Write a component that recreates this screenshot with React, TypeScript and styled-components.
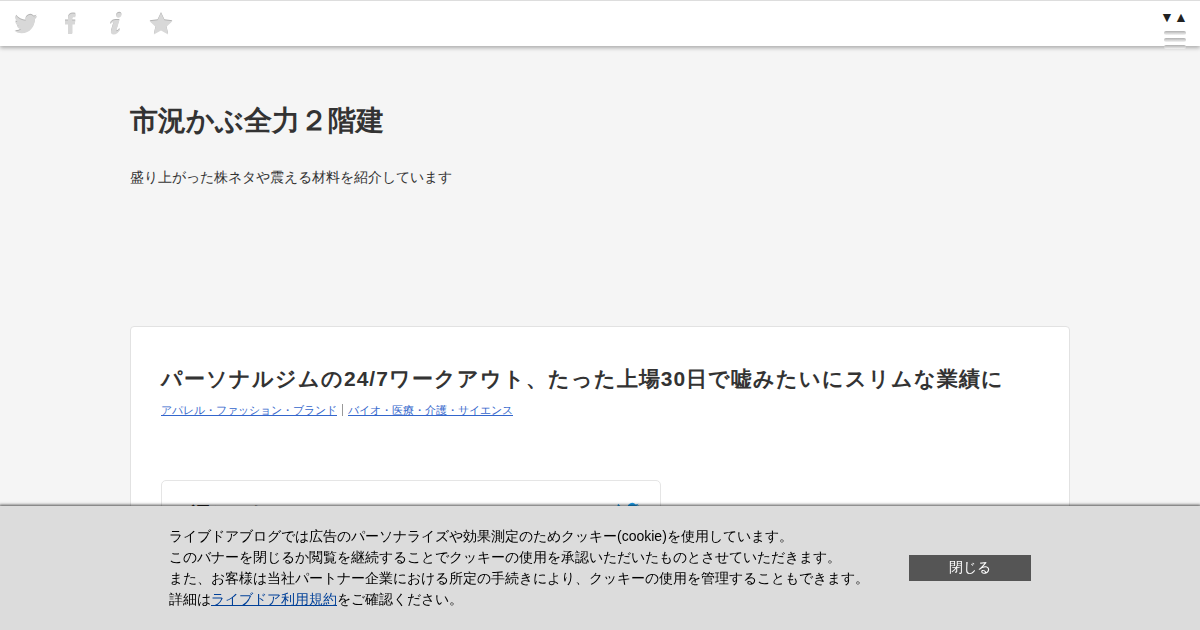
import React, { useState } from 'react';
import styled, { createGlobalStyle } from 'styled-components';

const GlobalStyle = createGlobalStyle`
  * { box-sizing: border-box; }
  body {
    margin: 0;
    background: #f5f5f5;
    color: #333;
    font: 14px/21px "Liberation Sans", sans-serif;
  }
  h1, h2, p { margin: 0; }
`;

const Page = styled.div`
  height: 100vh;
  overflow: hidden;
`;

const TopBar = styled.header`
  display: flex;
  justify-content: space-between;
  align-items: flex-start;
  height: 46px;
  padding: 0 14px;
  background: #fff;
  border-top: 1px solid #ddd;
  box-shadow: 0 2px 4px rgba(0, 0, 0, 0.3);
`;

const SocialNav = styled.nav`
  display: flex;
  align-items: center;
  gap: 21px;
  height: 44px;
`;

const IconLink = styled.a`
  display: block;
  width: 24px;
  height: 24px;
  svg { display: block; }
`;

const Tools = styled.div`
  display: flex;
  flex-direction: column;
  align-items: flex-end;
  gap: 3px;
  padding-top: 6px;
`;

const Jump = styled.div`
  display: flex;
  margin-right: -2px;
`;

const JumpLink = styled.a`
  width: 14px;
  text-align: center;
  color: #222;
  text-decoration: none;
`;

const MenuButton = styled.button`
  display: flex;
  flex-direction: column;
  gap: 3px;
  padding: 0;
  border: 0;
  background: none;
`;

const MenuLine = styled.span`
  width: 22px;
  height: 4px;
  border-radius: 2px;
  background: linear-gradient(#b0b0b0, #d8d8d8 60%, #f4f4f4);
`;

const Container = styled.div`
  max-width: 940px;
  margin: 0 auto;
`;

const BlogHeader = styled.div`
  height: 280px;
  padding-top: 54px;
`;

const BlogTitle = styled.h1`
  font-size: 28px;
  line-height: 42px;
`;

const BlogDescription = styled.p`
  margin-top: 25px;
`;

const Article = styled.article`
  min-height: 700px;
  padding: 36px 30px;
  background: #fff;
  border: 1px solid #e2e2e2;
  border-radius: 4px;
`;

const ArticleTitle = styled.h2`
  font-size: 21px;
  line-height: 32px;
  letter-spacing: 1px;
`;

const Categories = styled.div`
  display: flex;
  align-items: center;
  gap: 5px;
  margin-top: 7px;
  font-size: 11px;
  line-height: 16px;
`;

const CategoryLink = styled.a`
  color: #3366cc;
`;

const Divider = styled.span`
  width: 1px;
  height: 12px;
  background: #999;
`;

const Embed = styled.blockquote`
  display: flex;
  justify-content: space-between;
  max-width: 500px;
  height: 200px;
  margin: 62px 0 0;
  padding: 19px 20px 19px 28px;
  border: 1px solid #e5e5e5;
  border-radius: 5px;
`;

const EmbedAuthor = styled.strong`
  font-size: 20px;
  line-height: 28px;
  color: #222;
`;

const CookieBanner = styled.aside`
  position: fixed;
  left: 0;
  right: 0;
  bottom: 0;
  padding: 20px;
  background: #dcdcdc;
  color: #000;
  box-shadow: 0 0 3px 1px rgba(0, 0, 0, 0.7);
`;

const BannerInner = styled.div`
  display: flex;
  align-items: center;
  justify-content: space-between;
  max-width: 862px;
  margin: 0 auto;
`;

const TermsLink = styled.a`
  color: #004098;
`;

const CloseButton = styled.button`
  width: 122px;
  height: 26px;
  padding: 0 0 2px;
  border: 0;
  background: #555;
  color: #fff;
  font: inherit;
`;

const birdPath =
  'M23.1 5.1c-.8.4-1.7.6-2.6.7.9-.6 1.6-1.4 2-2.4-.9.5-1.9.9-2.9 1.1A4.6 4.6 0 0 0 11.700 8.700C7.800 8.500 4.400 6.700 2.100 3.800c-1.200 2.100-.6 4.800 1.400 6.200-.7 0-1.500-.2-2.100-.6 0 2.200 1.600 4.200 3.700 4.600-.7.2-1.4.2-2.1.1.6 1.8 2.300 3.200 4.300 3.200A9.400 9.400 0 0 1 .5 19.200a13.100 13.100 0 0 0 7.100 2.100c8.600 0 13.400-7.300 13.100-13.800.9-.7 1.700-1.500 2.400-2.400z';

const icons = [
  { label: 'Twitter', path: birdPath },
  { label: 'Facebook', path: 'M9 22v-9.500H6V8.600h3V6.200C9 3 11 1.500 14 1.500l2.300.2v3.500h-1.500c-1.200 0-1.600.6-1.600 1.500v1.900h3.100l-.5 3.900h-2.600V22z' },
  { label: 'Information', path: 'M15.200.8c1.500 0 2.500 1 2.200 2.500-.2 1.400-1.500 2.400-3 2.400s-2.500-1-2.200-2.400C12.400 1.800 13.700.8 15.200.8zM15.500 8l-3 10c-.3 1-.1 1.300.3 1.300.7 0 1.500-.9 2.400-2l.8.6c-1.700 2.500-3.700 4.600-6.300 4.600-2.400 0-3.200-1.500-2.600-3.700l2-6.700c.3-1.100.2-1.600-.4-1.600-.7 0-1.400.7-2 1.500l-.8-.6C7.500 9.100 9.300 8 11.600 8z' },
  { label: 'Bookmark', path: 'M12 1l3.400 7.300 8 .9-5.900 5.500 1.600 7.900-7.100-4-7.100 4 1.600-7.900L.6 9.200l8-.9z' },
];

function EmbossedIcon({ path }: { path: string }) {
  return (
    <svg width="24" height="24" viewBox="0 0 24 24" aria-hidden="true">
      <path d={path} fill="#b4b4b4" />
      <path d={path} fill="#d8d8d8" transform="translate(0 1)" />
    </svg>
  );
}

export default function App() {
  const [bannerOpen, setBannerOpen] = useState(true);
  return (
    <Page lang="ja">
      <GlobalStyle />
      <TopBar>
        <SocialNav>
          {icons.map((icon) => (
            <IconLink key={icon.label} href="#" aria-label={icon.label}>
              <EmbossedIcon path={icon.path} />
            </IconLink>
          ))}
        </SocialNav>
        <Tools>
          <Jump>
            <JumpLink href="#bottom">▼</JumpLink>
            <JumpLink href="#top">▲</JumpLink>
          </Jump>
          <MenuButton type="button" aria-label="メニュー">
            <MenuLine />
            <MenuLine />
            <MenuLine />
          </MenuButton>
        </Tools>
      </TopBar>
      <Container>
        <BlogHeader>
          <BlogTitle>市況かぶ全力２階建</BlogTitle>
          <BlogDescription>盛り上がった株ネタや震える材料を紹介しています</BlogDescription>
        </BlogHeader>
        <Article>
          <ArticleTitle>パーソナルジムの24/7ワークアウト、たった上場30日で嘘みたいにスリムな業績に</ArticleTitle>
          <Categories>
            <CategoryLink href="#">アパレル・ファッション・ブランド</CategoryLink>
            <Divider />
            <CategoryLink href="#">バイオ・医療・介護・サイエンス</CategoryLink>
          </Categories>
          <Embed>
            <EmbedAuthor>濁りけむし</EmbedAuthor>
            <svg width="24" height="24" viewBox="0 0 24 24" aria-hidden="true">
              <path d={birdPath} fill="#1da1f2" />
            </svg>
          </Embed>
        </Article>
      </Container>
      {bannerOpen && (
        <CookieBanner>
          <BannerInner>
            <p>
              ライブドアブログでは広告のパーソナライズや効果測定のためクッキー(cookie)を使用しています。
              <br />
              このバナーを閉じるか閲覧を継続することでクッキーの使用を承認いただいたものとさせていただきます。
              <br />
              また、お客様は当社パートナー企業における所定の手続きにより、クッキーの使用を管理することもできます。
              <br />
              詳細は<TermsLink href="#">ライブドア利用規約</TermsLink>をご確認ください。
            </p>
            <CloseButton type="button" onClick={() => setBannerOpen(false)}>閉じる</CloseButton>
          </BannerInner>
        </CookieBanner>
      )}
    </Page>
  );
}
